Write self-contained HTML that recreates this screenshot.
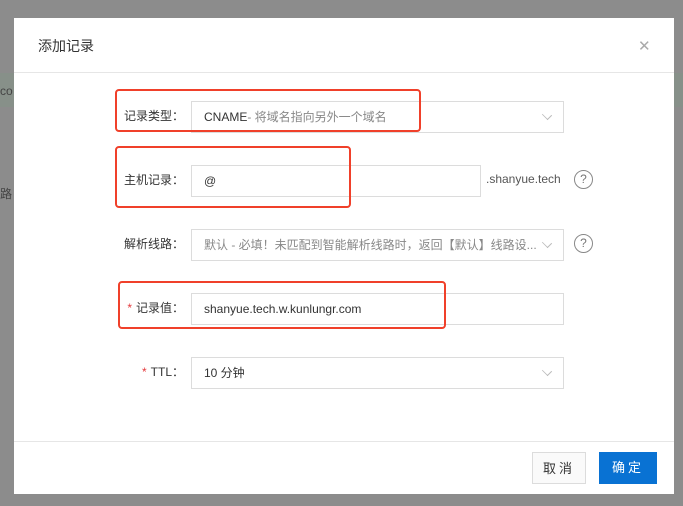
<!DOCTYPE html>
<html><head><meta charset="utf-8"><style>
*{margin:0;padding:0;box-sizing:border-box}
body{width:683px;height:506px;background:#8c8c8c;position:relative;overflow:hidden;font-family:"Liberation Sans","Noto Sans CJK SC",sans-serif;font-size:12px;color:#333}
.abs{position:absolute}
.modal{left:14px;top:18px;width:660px;height:476px;background:#fff}
.title{left:38px;top:36px;font-size:14px;color:#333}
.close{left:638px;top:37px;font-size:15px;color:#aaa;font-weight:200}
.hline{left:14px;width:660px;height:1px;background:#e6e6e6}
.lbl{text-align:right;width:90px;left:94px;font-size:12px;color:#333}
.lbl b{color:#e4393c;font-weight:normal;margin-right:4px}
.box{border:1px solid #dcdcdc;height:32px;background:#fff;padding-left:12px;line-height:30px;font-size:12px;color:#333;white-space:nowrap;overflow:hidden}
.arr{position:absolute;right:12px;top:9px;width:8px;height:8px;border-right:1px solid #bbb;border-bottom:1px solid #bbb;transform:rotate(45deg) scaleY(0.8)}
.q{width:19px;height:19px;border:1.5px solid #888;border-radius:50%;text-align:center;line-height:16px;font-size:12px;color:#777}
.red{border:2px solid #f0402a;border-radius:4px}
.btn{height:32px;line-height:31px;text-align:center;font-size:13px;letter-spacing:3px}
</style></head><body>
<div class="abs" style="left:0;top:73px;width:14px;height:34px;background:#879089"></div>
<div class="abs" style="left:674px;top:73px;width:9px;height:34px;background:#879089"></div>
<div class="abs" style="left:0;top:84px;font-size:12px;color:#444">co</div>
<div class="abs" style="left:0;top:185px;font-size:12px;color:#444">路</div>
<div class="abs modal"></div>
<div class="abs title">添加记录</div>
<div class="abs close">✕</div>
<div class="abs hline" style="top:72px"></div>

<div class="abs lbl" style="top:107px">记录类型：</div>
<div class="abs box" style="left:191px;top:101px;width:373px"><span>CNAME</span><span style="color:#888">- 将域名指向另外一个域名</span><i class="arr"></i></div>

<div class="abs lbl" style="top:171px">主机记录：</div>
<div class="abs box" style="left:191px;top:165px;width:290px">@</div>
<div class="abs" style="left:486px;top:172px;color:#555">.shanyue.tech</div>
<div class="abs q" style="left:574px;top:170px">?</div>

<div class="abs lbl" style="top:235px">解析线路：</div>
<div class="abs box" style="left:191px;top:229px;width:373px;color:#888">默认 - 必填！未匹配到智能解析线路时，返回【默认】线路设...<i class="arr"></i></div>
<div class="abs q" style="left:574px;top:234px">?</div>

<div class="abs lbl" style="top:299px"><b>*</b>记录值：</div>
<div class="abs box" style="left:191px;top:293px;width:373px">shanyue.tech.w.kunlungr.com</div>

<div class="abs lbl" style="top:363px"><b>*</b>TTL：</div>
<div class="abs box" style="left:191px;top:357px;width:373px">10 分钟<i class="arr"></i></div>

<div class="abs red" style="left:115px;top:89px;width:306px;height:43px"></div>
<div class="abs red" style="left:115px;top:146px;width:236px;height:62px"></div>
<div class="abs red" style="left:118px;top:281px;width:328px;height:48px"></div>

<div class="abs hline" style="top:441px"></div>
<div class="abs btn" style="left:532px;top:452px;width:54px;border:1px solid #dcdcdc;color:#333;background:#fafafa">取消</div>
<div class="abs btn" style="left:599px;top:452px;width:58px;background:#0972d3;color:#fff">确定</div>
</body></html>
